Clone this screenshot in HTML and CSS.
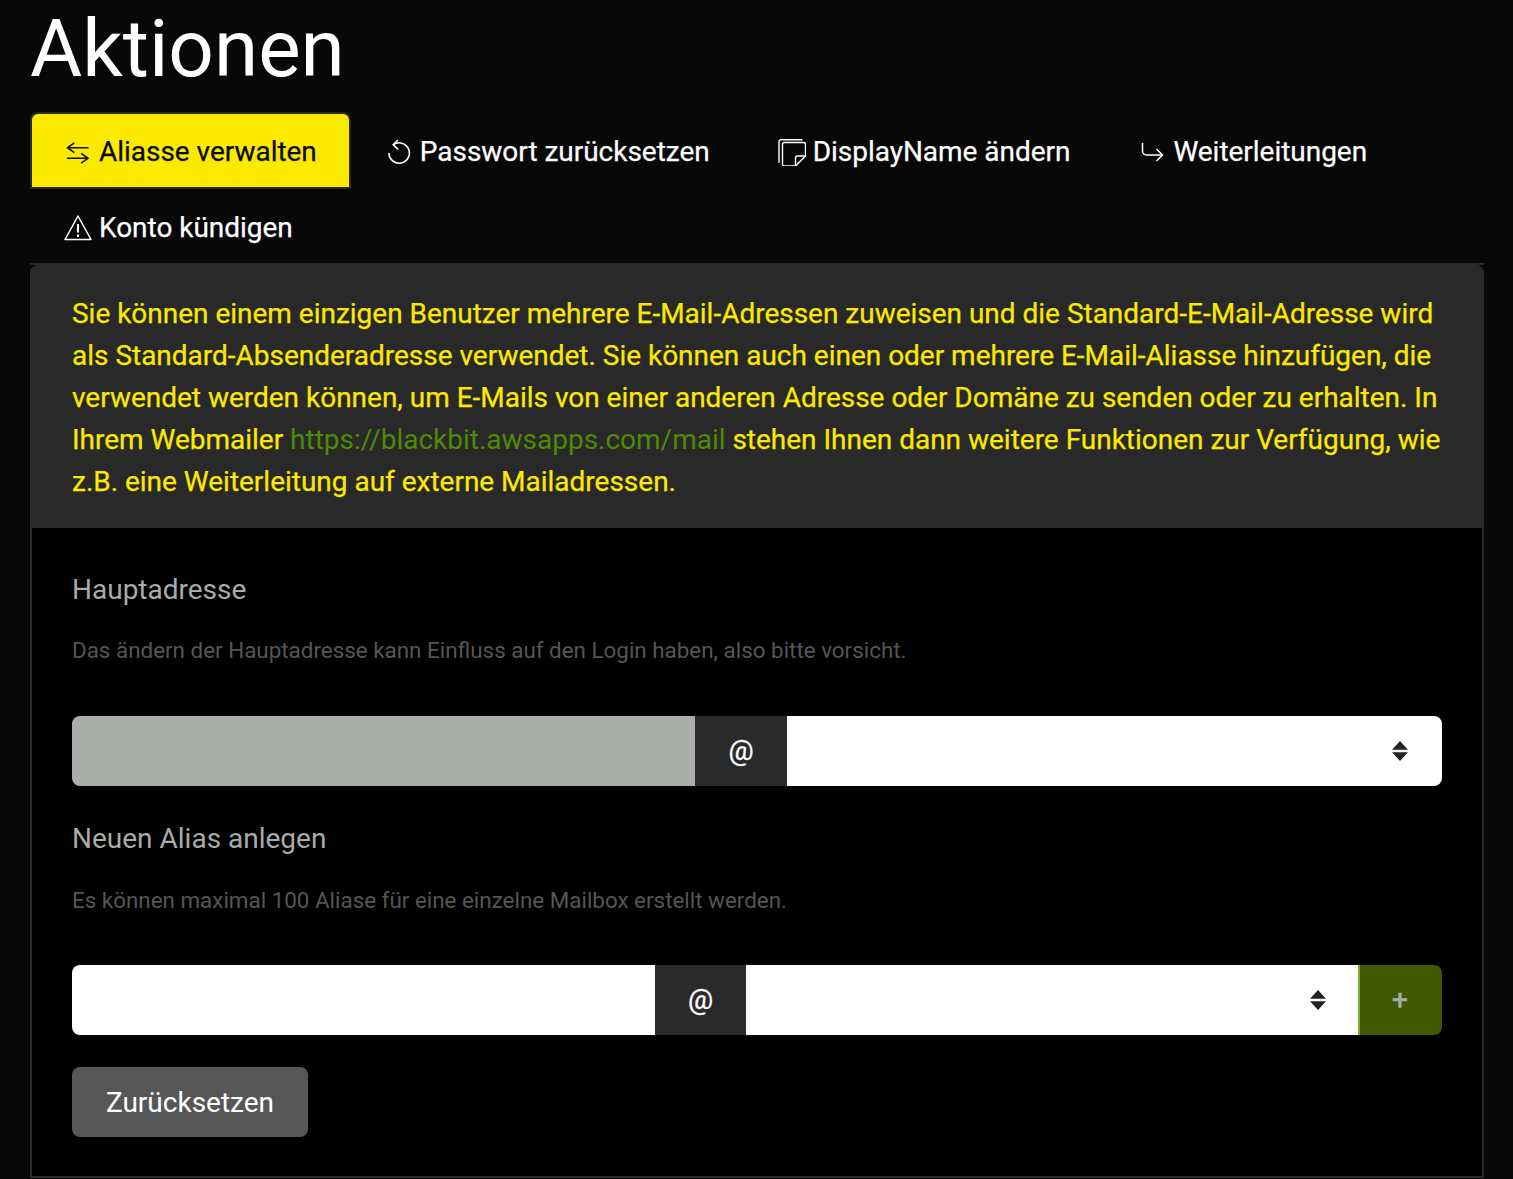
FILE: index.html
```html
<!DOCTYPE html>
<html lang="de">
<head>
<meta charset="utf-8">
<title>Aktionen</title>
<link rel="stylesheet" href="styles.css">
</head>
<body>
<main class="page">
  <h1 class="title">Aktionen</h1>
  <nav class="tabs">
    <a class="tab active">
      <svg class="icon" viewBox="0 0 28 28" fill="none" stroke="currentColor" stroke-width="1.5"><path d="M3.500 9.700H24.500M10.300 4.800 3.500 9.700l6.800 4.900"/><path d="M3 20.300H24M17.200 15.400l6.800 4.900-6.800 4.900"/></svg>
      <span>Aliasse verwalten</span>
    </a>
    <a class="tab">
      <svg class="icon" viewBox="0 0 28 28" fill="none" stroke="currentColor" stroke-width="1.6"><path d="M8.200 6.800A10.200 10.200 0 1 1 4 15"/><path d="M13 2 8.200 6.800l5 4.600"/></svg>
      <span>Passwort zurücksetzen</span>
    </a>
    <a class="tab">
      <svg class="icon" viewBox="0 0 28 28" fill="none" stroke="currentColor" stroke-width="1.4"><path d="M24.500 1.700H3a2 2 0 0 0-2 2v21"/><path d="M4.500 6.500a2 2 0 0 1 2-2h19a2 2 0 0 1 2 2V18l-10 10H6.500a2 2 0 0 1-2-2z"/><path d="M27.500 18H19.500a2 2 0 0 0-2 2v8"/></svg>
      <span>DisplayName ändern</span>
    </a>
    <a class="tab">
      <svg class="icon" viewBox="0 0 28 28" fill="none" stroke="currentColor" stroke-width="1.5"><path d="M4.500 5v8a4 4 0 0 0 4 4H24.500"/><path d="m18.500 11 6 6-6 6"/></svg>
      <span>Weiterleitungen</span>
    </a>
    <a class="tab">
      <svg class="icon" viewBox="0 0 28 28" fill="none" stroke="currentColor" stroke-width="1.5"><path d="M14 2 27 25.500H1z" stroke-linejoin="round"/><path d="M14 10v8.500M14 20.500v2.500" stroke-width="2"/></svg>
      <span>Konto kündigen</span>
    </a>
  </nav>
  <section class="card">
    <header class="card-head">
      Sie können einem einzigen Benutzer mehrere E-Mail-Adressen zuweisen und die Standard-E-Mail-Adresse wird als Standard-Absenderadresse verwendet. Sie können auch einen oder mehrere E-Mail-Aliasse hinzufügen, die verwendet werden können, um E-Mails von einer anderen Adresse oder Domäne zu senden oder zu erhalten. In Ihrem Webmailer <a class="link">https://blackbit.awsapps.com/mail</a> stehen Ihnen dann weitere Funktionen zur Verfügung, wie z.B. eine Weiterleitung auf externe Mailadressen.
    </header>
    <div class="card-body">
      <h2 class="label">Hauptadresse</h2>
      <p class="help">Das ändern der Hauptadresse kann Einfluss auf den Login haben, also bitte vorsicht.</p>
      <div class="addr">
        <div class="field disabled primary-local"></div>
        <div class="at">@</div>
        <div class="field select grow">
          <svg class="updown" viewBox="0 0 16 20"><path d="M8 0l8 8.700H0zM0 11.300h16L8 20z"/></svg>
        </div>
      </div>
      <h2 class="label second">Neuen Alias anlegen</h2>
      <p class="help alias-help">Es können maximal 100 Aliase für eine einzelne Mailbox erstellt werden.</p>
      <div class="addr">
        <div class="field alias-local"></div>
        <div class="at alias-at">@</div>
        <div class="field select grow alias-select">
          <svg class="updown" viewBox="0 0 16 20"><path d="M8 0l8 8.700H0zM0 11.300h16L8 20z"/></svg>
        </div>
        <div class="add">+</div>
      </div>
      <button class="reset" type="button">Zurücksetzen</button>
    </div>
  </section>
</main>
</body>
</html>
```
FILE: styles.css
```css
* { box-sizing: border-box; }
html, body { margin: 0; height: 100%; overflow: hidden; }
body {
  background: #080808;
  color: #fff;
  font-family: Roboto, "Liberation Sans", sans-serif;
  font-size: 28px;
  line-height: 42px;
}
.page { padding: 0 29px 0 30px; }
.title {
  margin: 0;
  padding-top: 1px;
  font-size: 80px;
  font-weight: 400;
  line-height: 96px;
  height: 112px;
  color: #fff;
}
.tabs {
  display: flex;
  flex-wrap: wrap;
  align-content: flex-start;
  border-bottom: 2px solid #2a2a2a;
  height: 153px;
}
.tab {
  display: flex;
  align-items: center;
  gap: 7px;
  height: 76px;
  padding: 4px 32px 0;
  color: #fff;
  border: 2px solid transparent;
  border-radius: 8px 8px 0 0;
  letter-spacing: -0.03px;
  -webkit-text-stroke: 0.25px currentColor;
}
.tab.active {
  height: 77px;
  margin-bottom: -1px;
  padding-top: 3px;
  background: #fbe900;
  color: #0a0a0a;
  border-color: #2a2a2a;
}
.icon { width: 28px; height: 28px; flex: none; }
.card {
  border: 2px solid #2a2a2a;
  border-radius: 8px 8px 0 0;
  background: #000;
  height: 913px;
}
.card-head {
  background: #292929;
  color: #fbe900;
  padding: 26px 40px 0;
  height: 261px;
  letter-spacing: -0.012px;
  -webkit-text-stroke: 0.25px currentColor;
}
.link { color: #4f8a05; -webkit-text-stroke: 0; }
.card-body { padding: 41px 40px 40px; }
.label {
  margin: 0;
  font-size: 28px;
  font-weight: 400;
  line-height: 42px;
  color: #aaa;
}
.label.second { margin-top: 32px; }
.help {
  margin: 22px 0 49px;
  font-size: 22.4px;
  line-height: 34px;
  color: #555;
}
.alias-help { margin: 23px 0 48px; }
.addr { display: flex; height: 70px; }
.field { background: #fff; height: 70px; }
.disabled { background: #abadab; }
.primary-local { width: 623px; border-radius: 8px 0 0 8px; }
.alias-local { width: 583px; border-radius: 8px 0 0 8px; }
.at {
  width: 92px;
  background: #2a2a2a;
  color: #fff;
  display: flex;
  align-items: center;
  justify-content: center;
  -webkit-text-stroke: 0.3px currentColor;
}
.alias-at { width: 91px; }
.grow {
  flex: 1;
  display: flex;
  align-items: center;
  justify-content: flex-end;
  padding-right: 34px;
}
.alias-select { padding-right: 32px; }
.addr > .grow:last-child { border-radius: 0 8px 8px 0; }
.updown { width: 16px; height: 20px; fill: #222; }
.add {
  width: 84px;
  padding-right: 2px;
  background: #3f5900;
  border-left: 2px solid #83a63c;
  border-radius: 0 8px 8px 0;
  color: #aaa;
  display: flex;
  align-items: center;
  justify-content: center;
  -webkit-text-stroke: 0.6px currentColor;
}
.reset {
  display: block;
  margin-top: 32px;
  padding: 2px 0 0;
  width: 236px;
  height: 70px;
  background: #575757;
  border: 0;
  border-radius: 8px;
  color: #fff;
  font: inherit;
}
```
